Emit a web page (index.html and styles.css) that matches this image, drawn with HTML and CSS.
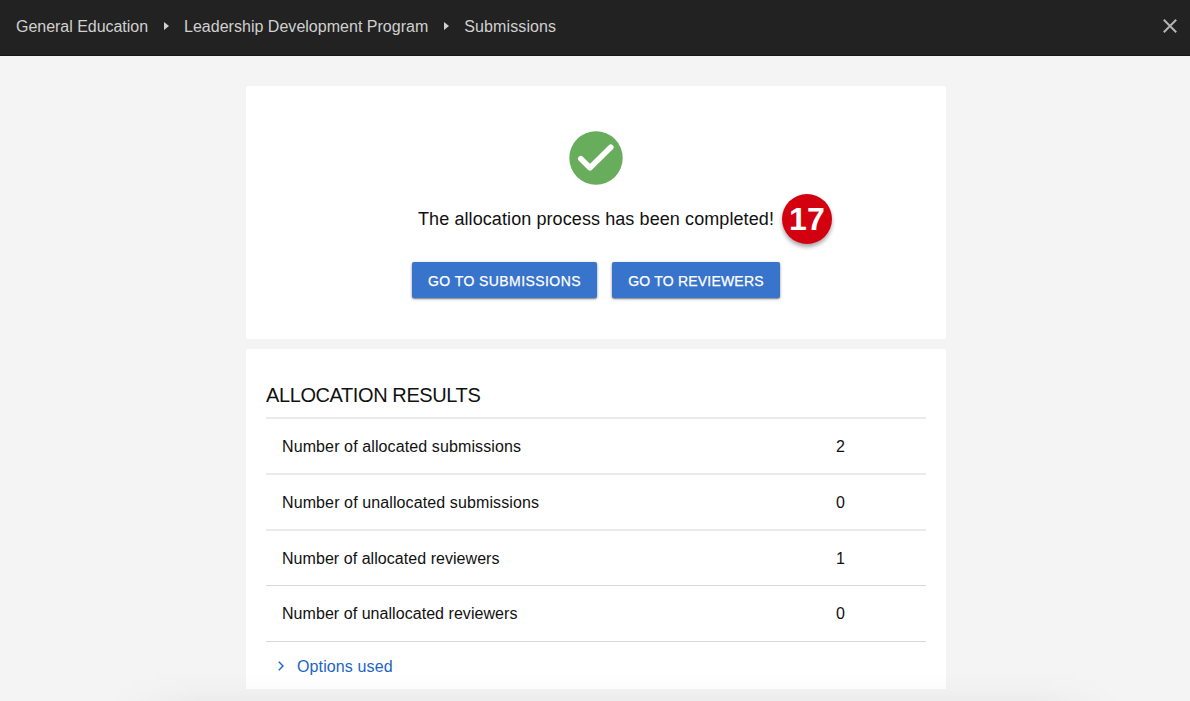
FILE: index.html
```html
<!DOCTYPE html>
<html lang="en">
<head>
    <meta charset="UTF-8">
    <meta name="viewport" content="width=device-width, initial-scale=1.0">
    <title>Allocation Results</title>
    <link rel="stylesheet" href="styles.css">
</head>
<body>
    <header class="topbar">
        <nav class="breadcrumbs">
            <a class="crumb crumb-home">General Education</a>
            <svg class="crumb-arrow" viewBox="0 0 5 8"><path d="M0 0l5 4-5 4z"/></svg>
            <a class="crumb crumb-course">Leadership Development Program</a>
            <svg class="crumb-arrow" viewBox="0 0 5 8"><path d="M0 0l5 4-5 4z"/></svg>
            <a class="crumb crumb-current">Submissions</a>
        </nav>
        <button class="close" aria-label="Close">
            <svg width="14" height="14" viewBox="0 0 14 14"><path d="M.8.8l12.4 12.4M13.2.8L.8 13.2"/></svg>
        </button>
    </header>

    <main class="container">
        <!-- Completion message -->
        <section class="card status">
            <svg class="check" viewBox="0 0 54 54">
                <circle cx="27" cy="27" r="26.7"/>
                <path d="M11.8 27.7l9.2 9.1 20.8-20.6"/>
            </svg>
            <div class="message">
                <span>The allocation process has been completed!</span>
                <span class="badge">17</span>
            </div>
            <div class="actions">
                <button class="btn btn-submissions">Go to submissions</button>
                <button class="btn btn-reviewers">Go to reviewers</button>
            </div>
        </section>

        <!-- Results -->
        <section class="card results">
            <h2>ALLOCATION RESULTS</h2>
            <table>
                <tbody>
                    <tr class="soft"><td>Number of allocated submissions</td><td>2</td></tr>
                    <tr class="soft"><td>Number of unallocated submissions</td><td>0</td></tr>
                    <tr class="soft reviewers"><td>Number of allocated reviewers</td><td>1</td></tr>
                    <tr class="reviewers"><td>Number of unallocated reviewers</td><td>0</td></tr>
                </tbody>
            </table>
            <a class="options">
                <svg width="6" height="10" viewBox="0 0 6 10"><path d="M.8.8L5 5 .8 9.2"/></svg>
                <span>Options used</span>
            </a>
        </section>
    </main>
    <div class="bottom-shadow"></div>
</body>
</html>
```
FILE: styles.css
```css
* {
    box-sizing: border-box;
}
body {
    margin: 0;
    height: 701px;
    background: #f4f4f4;
    color: #111;
    font-family: "Liberation Sans", Arial, sans-serif;
    font-size: 16px;
}
button {
    border: 0;
    font-family: inherit;
}
.topbar {
    display: flex;
    justify-content: space-between;
    height: 56px;
    padding: 0 13px 3px 16px;
    align-items: center;
    background: #222;
    border-bottom: 1px solid #161616;
}
.breadcrumbs {
    display: flex;
    align-items: center;
    color: #d0d0d0;
}
.crumb {
    padding-top: 1px;
}
.crumb-home {
    letter-spacing: -0.03px;
}
.crumb-course {
    letter-spacing: 0.02px;
}
.crumb-current {
    letter-spacing: 0.1px;
}
.crumb-arrow {
    width: 5px;
    height: 8px;
    margin: 0 15px 0 16px;
    fill: #d0d0d0;
}
.close {
    display: flex;
    padding: 0;
    background: none;
}
.close path {
    fill: none;
    stroke: #b4b4b4;
    stroke-width: 2;
}
.container {
    width: 700px;
    margin: 30px 0 0 246px;
}
.card {
    background: #fff;
    border-radius: 2px;
}
.status {
    display: flex;
    flex-direction: column;
    align-items: center;
    height: 253px;
    padding-top: 45px;
    margin-bottom: 10px;
}
.check {
    width: 54px;
    height: 54px;
    fill: #67ad5b;
}
.check path {
    fill: none;
    stroke: #fff;
    stroke-width: 5.6;
    stroke-linecap: round;
    stroke-linejoin: round;
}
.message {
    position: relative;
    margin-top: 23px;
    line-height: 22px;
    font-size: 18px;
    letter-spacing: 0.09px;
    white-space: nowrap;
}
.badge {
    position: absolute;
    left: calc(100% + 8px);
    top: -14px;
    width: 50px;
    height: 50px;
    border-radius: 50%;
    background: #d3000f;
    color: #fff;
    box-shadow: 0 3px 4px rgba(0, 0, 0, 0.35);
    font-size: 32px;
    font-weight: bold;
    line-height: 50px;
    text-align: center;
}
.actions {
    display: flex;
    gap: 15px;
    margin-top: 32px;
}
.btn {
    height: 36px;
    padding: 1px 0 0;
    border-radius: 2px;
    background: #3874cb;
    color: #fff;
    box-shadow: 0 1px 3px rgba(0, 0, 0, 0.4), 0 1px 1px rgba(0, 0, 0, 0.2);
    font-size: 14px;
    letter-spacing: 0.42px;
    -webkit-text-stroke: 0.25px #fff;
    text-transform: uppercase;
}
.btn-submissions {
    width: 185px;
}
.btn-reviewers {
    width: 168px;
    letter-spacing: 0.2px;
}
.results {
    height: 340px;
    padding: 34px 20px 0;
    border-radius: 2px 2px 0 0;
}
.results h2 {
    margin: 0;
    height: 34px;
    line-height: 24px;
    font-size: 20px;
    font-weight: normal;
    letter-spacing: -0.4px;
}
.results table {
    width: 100%;
    border-collapse: separate;
    border-spacing: 0;
}
.results td {
    height: 56px;
    padding: 0 0 0 16px;
    border-top: 1px solid #d9d9d9;
    letter-spacing: 0.11px;
}
.results .soft td {
    padding-top: 1px;
    border-top: 2px solid #ebebeb;
}
.results .reviewers td {
    letter-spacing: 0.05px;
}
.results td:last-child {
    width: 106px;
}
.options {
    display: flex;
    align-items: center;
    gap: 13px;
    height: 49px;
    padding-left: 12px;
    border-top: 1px solid #d9d9d9;
    color: #1c63c8;
    letter-spacing: 0.12px;
}
.options span {
    padding-top: 1px;
}
.options path {
    fill: none;
    stroke: #1c63c8;
    stroke-width: 1.4;
}
.bottom-shadow {
    position: absolute;
    left: 110px;
    right: 70px;
    bottom: 0;
    height: 30px;
    background: linear-gradient(rgba(0, 0, 0, 0), rgba(0, 0, 0, 0.01) 60%, rgba(0, 0, 0, 0.03));
    -webkit-mask-image: linear-gradient(to right, transparent, #000 90px, #000 calc(100% - 90px), transparent);
    mask-image: linear-gradient(to right, transparent, #000 90px, #000 calc(100% - 90px), transparent);
}
```
